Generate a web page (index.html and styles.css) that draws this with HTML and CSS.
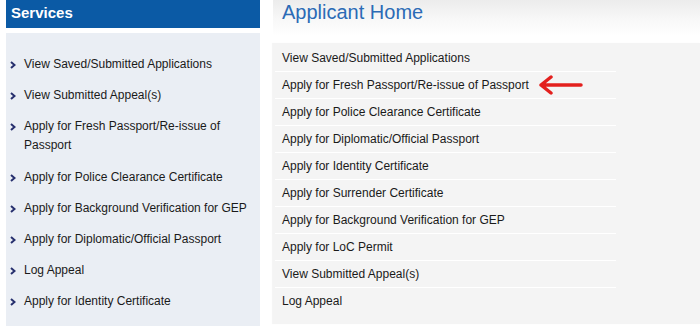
FILE: index.html
```html
<!DOCTYPE html>
<html>
<head>
<meta charset="utf-8">
<link rel="stylesheet" href="styles.css">
</head>
<body>
<div class="page">
  <aside class="sidebar">
    <div class="side-head">Services</div>
    <ul class="side-list">
      <li><svg class="chev" viewBox="0 0 6 8"><polyline points="1,1 4.5,4 1,7"/></svg><span>View Saved/Submitted Applications</span></li>
      <li><svg class="chev" viewBox="0 0 6 8"><polyline points="1,1 4.5,4 1,7"/></svg><span>View Submitted Appeal(s)</span></li>
      <li><svg class="chev" viewBox="0 0 6 8"><polyline points="1,1 4.5,4 1,7"/></svg><span>Apply for Fresh Passport/Re-issue of Passport</span></li>
      <li><svg class="chev" viewBox="0 0 6 8"><polyline points="1,1 4.5,4 1,7"/></svg><span>Apply for Police Clearance Certificate</span></li>
      <li><svg class="chev" viewBox="0 0 6 8"><polyline points="1,1 4.5,4 1,7"/></svg><span>Apply for Background Verification for GEP</span></li>
      <li><svg class="chev" viewBox="0 0 6 8"><polyline points="1,1 4.5,4 1,7"/></svg><span>Apply for Diplomatic/Official Passport</span></li>
      <li><svg class="chev" viewBox="0 0 6 8"><polyline points="1,1 4.5,4 1,7"/></svg><span>Log Appeal</span></li>
      <li><svg class="chev" viewBox="0 0 6 8"><polyline points="1,1 4.5,4 1,7"/></svg><span>Apply for Identity Certificate</span></li>
    </ul>
  </aside>
  <main class="main">
    <h1 class="title">Applicant Home</h1>
    <div class="panel">
      <ul class="rows">
        <li>View Saved/Submitted Applications</li>
        <li class="marked">Apply for Fresh Passport/Re-issue of Passport
          <svg class="arrow" viewBox="0 0 46 20"><path d="M13 2 L3 10 L13 18 M3 10 L43 10"/></svg>
        </li>
        <li>Apply for Police Clearance Certificate</li>
        <li>Apply for Diplomatic/Official Passport</li>
        <li>Apply for Identity Certificate</li>
        <li>Apply for Surrender Certificate</li>
        <li>Apply for Background Verification for GEP</li>
        <li>Apply for LoC Permit</li>
        <li>View Submitted Appeal(s)</li>
        <li>Log Appeal</li>
      </ul>
    </div>
  </main>
</div>
</body>
</html>
```

FILE: styles.css
```css
html, body {
  margin: 0;
  padding: 0;
  background: #ffffff;
}
body {
  font-family: "Liberation Sans", Arial, sans-serif;
  color: #1a1a1a;
  width: 700px;
  height: 326px;
  overflow: hidden;
}
.page {
  display: flex;
  align-items: stretch;
  height: 326px;
}
.sidebar {
  width: 254px;
  margin-left: 6px;
  display: flex;
  flex-direction: column;
  flex: none;
}
.side-head {
  background: #0b5aa5;
  color: #ffffff;
  font-weight: bold;
  font-size: 15px;
  height: 28px;
  line-height: 26px;
  padding-left: 5px;
}
.side-list {
  list-style: none;
  margin: 5px 0 0 0;
  padding: 22px 10px 0 3px;
  background: #eaeef4;
  flex: 1;
}
.side-list li {
  display: flex;
  align-items: flex-start;
  font-size: 12px;
  line-height: 19px;
  margin-bottom: 12.2px;
}
.chev {
  width: 6px;
  height: 8px;
  flex: none;
  margin: 6px 8px 0 1px;
  fill: none;
  stroke: #27306e;
  stroke-width: 2;
}
.main {
  flex: 1;
  margin-left: 13px;
  display: flex;
  flex-direction: column;
  background: linear-gradient(to bottom, #ececec 0px, #f7f7f7 18px, #ffffff 36px);
}
.title {
  margin: 0;
  font-weight: normal;
  font-size: 20px;
  color: #2b6bb6;
  height: 43px;
  line-height: 24px;
  padding-left: 9px;
}
.panel {
  background: #f4f4f4;
  box-shadow: -1px 0 1px rgba(0,0,0,0.04);
  padding: 2px 0 9px 2px;
}
.rows {
  list-style: none;
  margin: 0;
  padding: 0;
  width: 341px;
}
.rows li {
  height: 27px;
  line-height: 27px;
  font-size: 12px;
  padding-left: 7px;
  border-top: 1px solid #ffffff;
  margin-top: -1px;
  position: relative;
}
.rows li:first-child {
  border-top: none;
  margin-top: 0;
}
.arrow {
  position: absolute;
  left: 263px;
  top: 3px;
  width: 46px;
  height: 20px;
  fill: none;
  stroke: #e3201e;
  stroke-width: 3.5;
  stroke-linecap: round;
  stroke-linejoin: round;
}
```
